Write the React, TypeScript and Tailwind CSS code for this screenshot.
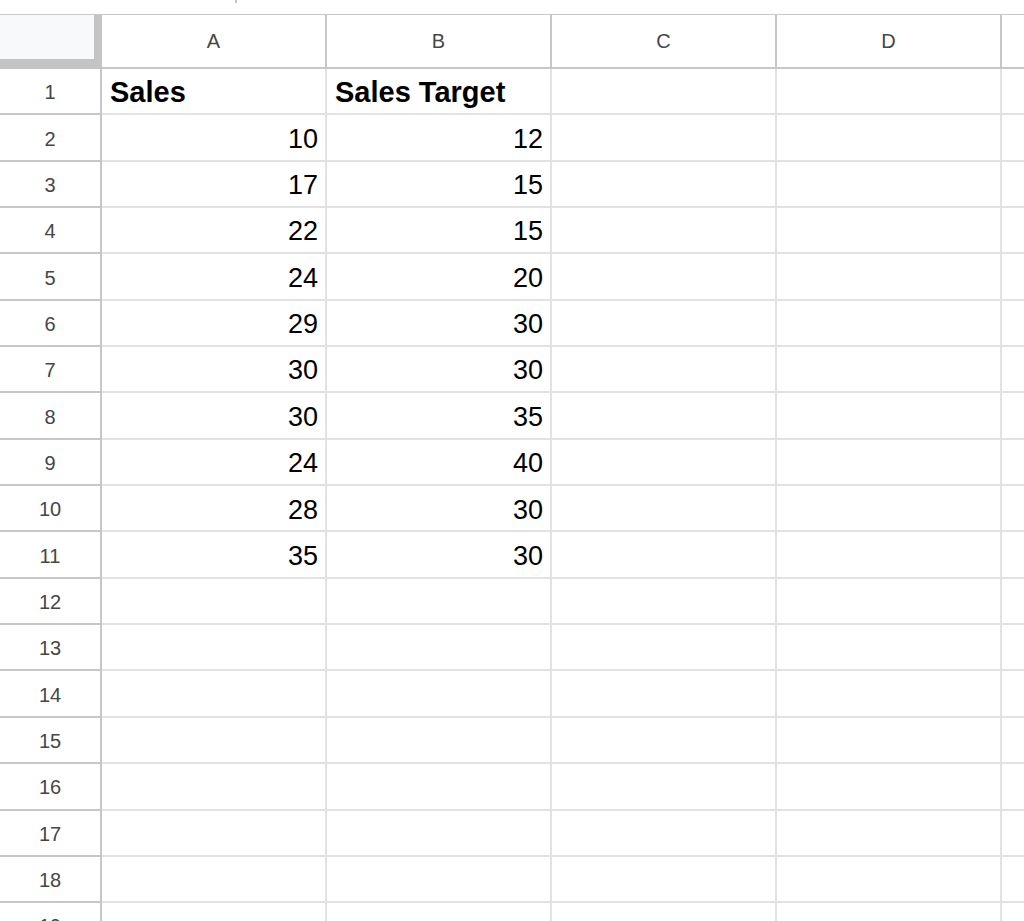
const columns = ["A", "B", "C", "D", "E"];

// column A / B values, row 1 is the bold heading
const rows: (string | number)[][] = [
  ["Sales", "Sales Target"],
  [10, 12],
  [17, 15],
  [22, 15],
  [24, 20],
  [29, 30],
  [30, 30],
  [30, 35],
  [24, 40],
  [28, 30],
  [35, 30],
];

const rowCount = 19;

export default function App() {
  return (
    <div className="h-[921px] w-[1024px] overflow-hidden bg-white font-['Liberation_Sans',Arial,sans-serif]">
      {/* toolbar remnant above the grid */}
      <div className="flex h-[14px] items-start">
        <div className="ml-[235px] h-[3px] w-[2px] bg-[#c4c4c4]" />
      </div>

      {/* column headers (E is off-screen past its edge, label not visible) */}
      <div className="flex h-[55px] border-t border-[#c7c7c7]">
        <div className="h-full w-[102px] shrink-0 border-r-8 border-b-[10px] border-[#c4c4c4] bg-[#f8f9fa]" />
        {columns.map((col) => (
          <div
            key={col}
            className="flex h-full w-[225px] shrink-0 items-center justify-center border-r-2 border-b-2 border-[#c7c7c7] text-[20px] text-[#444746]"
          >
            {col === "E" ? "" : col}
          </div>
        ))}
      </div>

      {/* data rows */}
      {Array.from({ length: rowCount }, (_, i) => {
        const cells = rows[i] ?? [];
        const isHeading = i === 0;
        return (
          <div key={i} className="flex h-[46.35px]">
            <div className="flex h-full w-[102px] shrink-0 items-center justify-center border-r-2 border-b-2 border-[#c7c7c7] pt-[2px] text-[20px] text-[#444746]">
              {i + 1}
            </div>
            {columns.map((col, c) => {
              const value = cells[c];
              return (
                <div
                  key={col}
                  className={
                    isHeading
                      ? "flex h-full w-[225px] shrink-0 items-center justify-start border-r-2 border-b-2 border-[#e2e2e2] pt-[3px] pl-[8px] text-[29px] font-bold text-black"
                      : "flex h-full w-[225px] shrink-0 items-center justify-end border-r-2 border-b-2 border-[#e2e2e2] pt-[3px] pr-[7px] text-[27px] text-black"
                  }
                >
                  {value}
                </div>
              );
            })}
          </div>
        );
      })}
    </div>
  );
}
